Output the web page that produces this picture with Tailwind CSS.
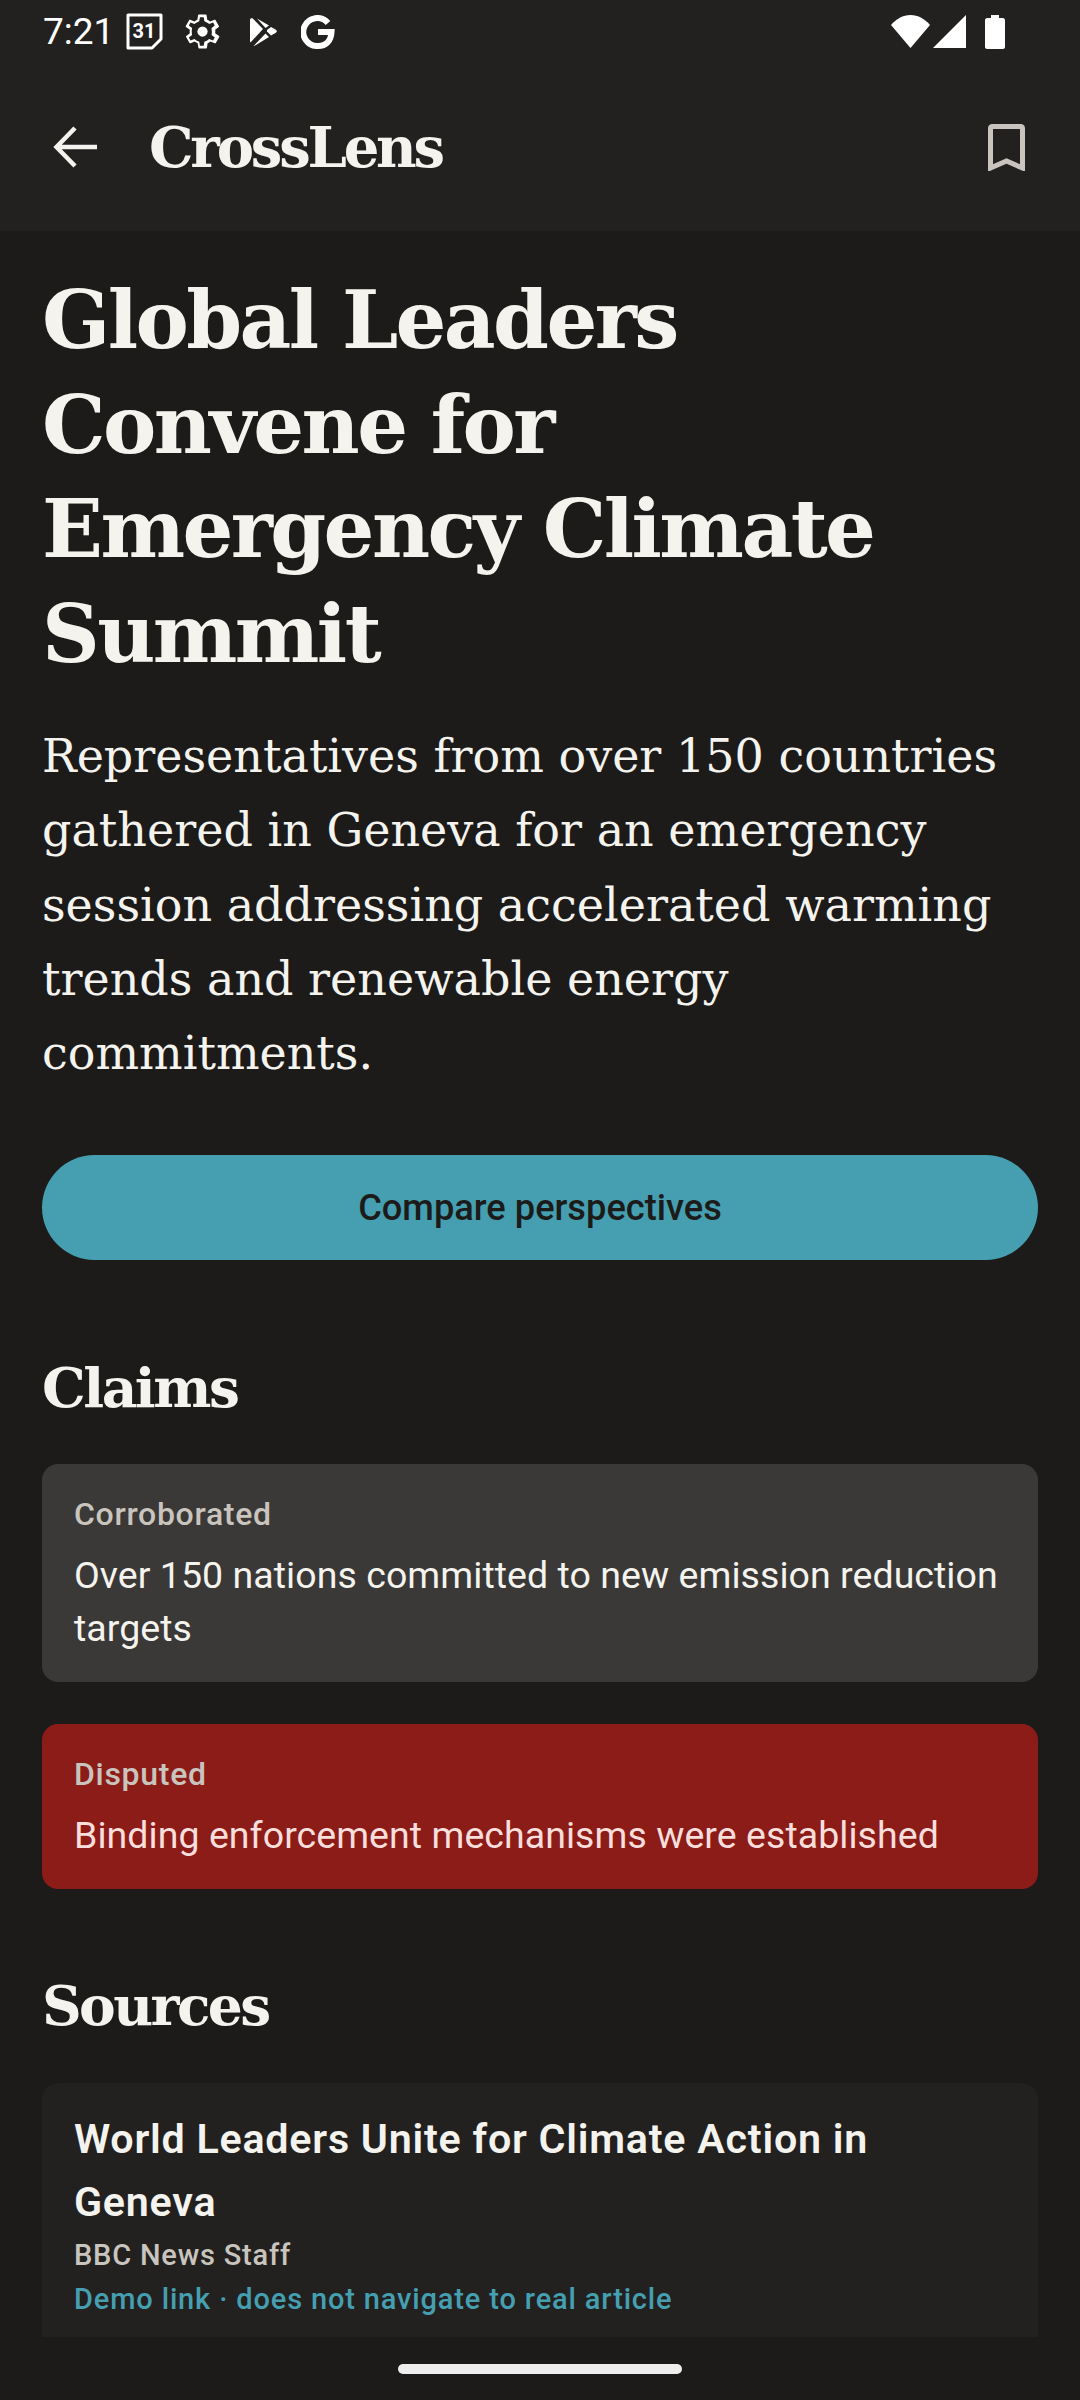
<!DOCTYPE html>
<html lang="en">
<head>
  <meta charset="UTF-8" />
  <title>CrossLens</title>
  <script src="https://cdn.jsdelivr.net/npm/@tailwindcss/browser@4"></script>
</head>
<body class="w-[1080px] h-[2400px] overflow-hidden bg-[#1c1b1a] font-['Roboto',sans-serif]">

  <!-- Status bar + app bar -->
  <header class="h-[231px] bg-[#222120]">
    <div class="h-[63px] pl-[43px] pr-[75px] flex items-center text-white">
      <span class="text-[37px] leading-[63px] w-[69px]">7:21</span>
      <div class="flex items-center ml-[14px]">
        <svg class="w-[38px] h-[38px]" viewBox="0 0 38 38"><path d="M2 2H35V26L26 35H2Z" fill="none" stroke="#fff" stroke-width="3" stroke-linejoin="round"/><text x="18" y="25" text-anchor="middle" font-family="Roboto" font-weight="700" font-size="20" fill="#fff">31</text></svg>
        <svg class="w-[41px] h-[41px] ml-[18px]" viewBox="0 0 24 24"><path fill="#fff" d="M19.4 13c0-.3.1-.6.1-1s0-.7-.1-1l2.1-1.6c.2-.2.2-.4.1-.6l-2-3.5c-.1-.2-.4-.3-.6-.2l-2.5 1c-.5-.4-1.100-.7-1.700-1l-.4-2.600c0-.3-.2-.4-.5-.4h-4c-.3 0-.5.1-.5.4l-.4 2.600c-.6.3-1.200.6-1.700 1l-2.500-1c-.2-.1-.5 0-.6.2l-2 3.500c-.1.2-.1.4.1.6L4.600 11c0 .3-.1.7-.1 1s0 .7.1 1l-2.100 1.600c-.2.2-.2.4-.1.6l2 3.500c.1.2.4.3.6.200l2.500-1c.5.400 1.100.700 1.700 1l.4 2.600c0 .3.2.4.5.4h4c.3 0 .5-.1.5-.4l.4-2.600c.6-.3 1.200-.6 1.700-1l2.500 1c.2.1.5 0 .6-.2l2-3.500c.1-.2.1-.4-.1-.6ZM17.400 11.700c.1.300.1.600.1.300s0 .6-.1 1.300l-.1.700 1.900 1.500-1 1.800-2.300-.9-.6.4c-.5.400-1 .7-1.600.9l-.6.300-.4 2.400h-2.200l-.4-2.400-.6-.3c-.6-.2-1.100-.5-1.600-.9l-.6-.4-2.300.9-1-1.800 1.900-1.500-.1-.7c-.1-.7-.1-1-.1-1.300s0-.6.1-1.300l.1-.7-1.900-1.500 1-1.800 2.300.9.6-.4c.5-.4 1-.7 1.600-.9l.6-.3.4-2.400h2.200l.4 2.400.6.3c.6.2 1.100.5 1.600.9l.6.4 2.300-.9 1 1.800-1.900 1.500Z"/><circle cx="12" cy="12" r="3" fill="#fff"/></svg>
        <svg class="w-[28px] h-[30px] ml-[26px]" viewBox="0 0 28 30"><path fill="#fff" d="M1 3C1 1.500 2.500.8 4 1.700L14 12 1.500 25.500C1.200 25 1 24.500 1 24Z"/><path fill="#fff" d="M8 1.500 20 8.500 16.500 11Z"/><path fill="#fff" d="M18 13l4-3 4.500 2.500c1.600 1 1.600 2.500 0 3.500L22 18.500 18 14.500Z"/><path fill="#fff" d="M4.500 29 16.500 16.500 20 20 7 28C6 28.700 5 29 4.500 29Z"/></svg>
        <svg class="w-[34px] h-[34px] ml-[24px]" viewBox="0 0 34 34"><path fill="none" stroke="#fff" stroke-width="6" d="M27 8A14 14 0 1 0 17 31C25 31 30 26 30.500 17H17"/></svg>
      </div>
      <div class="ml-auto flex items-center">
        <svg class="w-[39px] h-[33px]" viewBox="0 0 39 33"><path fill="#fff" d="M0 10C5 4 12 0 19.500 0S34 4 39 10L19.500 33Z"/></svg>
        <svg class="w-[33px] h-[33px] ml-[3px]" viewBox="0 0 33 33"><path fill="#fff" d="M33 0V33H0Z"/></svg>
        <svg class="w-[20px] h-[34px] ml-[19px]" viewBox="0 0 20 34"><path fill="#fff" d="M6 0H14V3H18C19 3 20 4 20 5V32C20 33 19 34 18 34H2C1 34 0 33 0 32V5C0 4 1 3 2 3H6Z"/></svg>
      </div>
    </div>
    <div class="h-[168px] flex items-center">
      <svg class="w-[44px] h-[44px] ml-[53px]" viewBox="0 0 44 44"><path d="M44 22H4M22 3 3.500 22 22 41" fill="none" stroke="#f5f3ee" stroke-width="4.500"/></svg>
      <h1 class="ml-[52px] text-[56px] leading-[64px] font-bold text-[#f5f3ee] font-['DejaVu_Serif',serif] tracking-[-3.2px]">CrossLens</h1>
      <svg class="w-[37px] h-[47px] ml-auto mr-[55px]" viewBox="0 0 37 47"><path d="M2.500 44V4.500C2.500 3 3.500 2.500 4.500 2.500H32.500C33.500 2.500 34.500 3 34.500 4.500V44L18.500 37Z" fill="none" stroke="#c9c5be" stroke-width="5"/></svg>
    </div>
  </header>

  <!-- Scrolling content, clipped above the gesture bar -->
  <main class="h-[2106px] overflow-hidden px-[42px] pt-[37px]">
    <h2 class="text-[80px] leading-[104.5px] font-bold text-[#f5f3ee] font-['DejaVu_Serif',serif] tracking-[-2.6px]">Global Leaders Convene for Emergency Climate Summit</h2>
    <p class="mt-[33px] text-[46px] leading-[74.25px] text-[#f5f3ee] font-['DejaVu_Serif',serif]">Representatives from over 150 countries gathered in Geneva for an emergency session addressing accelerated warming trends and renewable energy commitments.</p>

    <button class="mt-[65px] w-full h-[105px] rounded-full bg-[#459fb0] text-[#1c1b1a] text-[36.250px] font-medium">Compare perspectives</button>

    <h3 class="mt-[95px] text-[55px] leading-[66px] font-bold text-[#f5f3ee] font-['DejaVu_Serif',serif] tracking-[-2.5px]">Claims</h3>

    <div class="mt-[43px] rounded-[16px] bg-[#3a3937] px-[32px] pt-[28px] h-[218px]">
      <p class="text-[32px] leading-[44px] font-medium tracking-[0.7px] text-[#c9c5be]">Corroborated</p>
      <p class="mt-[13px] text-[37.500px] leading-[53px] tracking-[0.05px] text-[#f5f3ee]">Over 150 nations committed to new emission reduction targets</p>
    </div>

    <div class="mt-[42px] rounded-[16px] bg-[#8c1c18] px-[32px] pt-[28px] h-[165px]">
      <p class="text-[32px] leading-[44px] font-medium tracking-[0.7px] text-[#c9c5be]">Disputed</p>
      <p class="mt-[13px] text-[37.500px] leading-[53px] tracking-[0.05px] text-[#f9dedc]">Binding enforcement mechanisms were established</p>
    </div>

    <h3 class="mt-[84px] text-[55px] leading-[66px] font-bold text-[#f5f3ee] font-['DejaVu_Serif',serif] tracking-[-2.6px]">Sources</h3>

    <div class="mt-[44px] rounded-t-[16px] bg-[#222120] px-[32px] pt-[25px] h-[300px]">
      <p class="text-[41.250px] leading-[62.500px] font-semibold tracking-[0.75px] text-[#f5f3ee]">World Leaders Unite for Climate Action in Geneva</p>
      <p class="text-[29px] leading-[44px] font-medium tracking-[0.8px] text-[#c9c5be]">BBC News Staff</p>
      <p class="text-[29px] leading-[44px] font-medium tracking-[0.85px] text-[#459fb0]">Demo link · does not navigate to real article</p>
    </div>
  </main>

  <!-- Gesture bar -->
  <div class="h-[63px] flex justify-center pt-[27px]">
    <div class="w-[284px] h-[10px] rounded-full bg-[#eeeeee]"></div>
  </div>
</body>
</html>
